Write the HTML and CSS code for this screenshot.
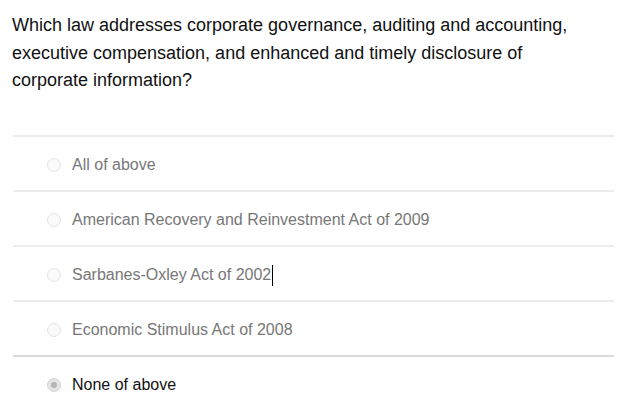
FILE: index.html
```html
<!DOCTYPE html>
<html>
<head>
<meta charset="utf-8">
<link rel="stylesheet" href="styles.css">
</head>
<body>
<div class="quiz">
  <p class="question">Which law addresses corporate governance, auditing and accounting, executive compensation, and enhanced and timely disclosure of corporate information?</p>
  <ul class="options">
    <li class="option"><span class="radio"></span><span class="label">All of above</span></li>
    <li class="option"><span class="radio"></span><span class="label">American Recovery and Reinvestment Act of 2009</span></li>
    <li class="option"><span class="radio"></span><span class="label">Sarbanes-Oxley Act of 2002<span class="caret"></span></span></li>
    <li class="option"><span class="radio"></span><span class="label">Economic Stimulus Act of 2008</span></li>
    <li class="option selected"><span class="radio"></span><span class="label">None of above</span></li>
  </ul>
</div>
</body>
</html>
```

FILE: styles.css
```css
html, body {
  margin: 0;
  padding: 0;
  background: #fff;
}
.quiz {
  font-family: "Liberation Sans", Arial, sans-serif;
  padding: 12px 0 0 0;
}
.question {
  margin: 0;
  padding: 0 20px 0 12px;
  font-size: 18px;
  line-height: 27.5px;
  color: #111;
}
.options {
  list-style: none;
  margin: 40px 6px 0 13px;
  padding: 0;
}
.option {
  display: flex;
  align-items: center;
  height: 49px;
  padding-top: 4px;
  border-top: 2px solid #ececec;
  padding-left: 34px;
  gap: 11px;
  font-size: 16px;
  color: #777;
}
.option.selected {
  border-top-color: #dadada;
  color: #111;
}
.radio {
  width: 12px;
  height: 12px;
  border: 1px solid #e4e4e4;
  border-radius: 50%;
  background: #fafafa;
  position: relative;
}
.selected .radio {
  background: #e4e4e4;
  border-color: #d4d4d4;
}
.selected .radio::after {
  content: "";
  position: absolute;
  left: 3px;
  top: 3px;
  width: 6px;
  height: 6px;
  border-radius: 50%;
  background: #b4b4b4;
}
.label {
  display: inline-flex;
  align-items: center;
}
.caret {
  display: inline-block;
  width: 1px;
  height: 21px;
  background: #000;
  margin-left: 1px;
}
```
